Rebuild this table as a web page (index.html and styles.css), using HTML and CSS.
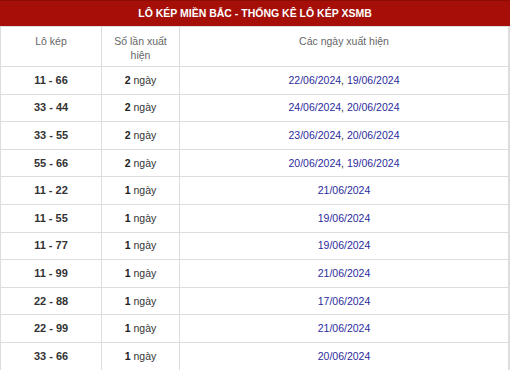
FILE: index.html
```html
<!DOCTYPE html>
<html lang="vi">
<head>
<meta charset="utf-8">
<title>Lô kép miền Bắc</title>
<link rel="stylesheet" href="styles.css">
</head>
<body>
<div class="box">
  <div class="title">LÔ KÉP MIỀN BẮC - THỐNG KÊ LÔ KÉP XSMB</div>
  <table class="tbl">
    <colgroup>
      <col class="c1"><col class="c2"><col class="c3">
    </colgroup>
    <thead>
      <tr><th>Lô kép</th><th>Số lần xuất<br>hiện</th><th>Các ngày xuất hiện</th></tr>
    </thead>
    <tbody>
      <tr><td class="pair">11 - 66</td><td><b>2</b> ngày</td><td><span class="d">22/06/2024</span>, <span class="d">19/06/2024</span></td></tr>
      <tr><td class="pair">33 - 44</td><td><b>2</b> ngày</td><td><span class="d">24/06/2024</span>, <span class="d">20/06/2024</span></td></tr>
      <tr><td class="pair">33 - 55</td><td><b>2</b> ngày</td><td><span class="d">23/06/2024</span>, <span class="d">20/06/2024</span></td></tr>
      <tr><td class="pair">55 - 66</td><td><b>2</b> ngày</td><td><span class="d">20/06/2024</span>, <span class="d">19/06/2024</span></td></tr>
      <tr><td class="pair">11 - 22</td><td><b>1</b> ngày</td><td><span class="d">21/06/2024</span></td></tr>
      <tr><td class="pair">11 - 55</td><td><b>1</b> ngày</td><td><span class="d">19/06/2024</span></td></tr>
      <tr><td class="pair">11 - 77</td><td><b>1</b> ngày</td><td><span class="d">19/06/2024</span></td></tr>
      <tr><td class="pair">11 - 99</td><td><b>1</b> ngày</td><td><span class="d">21/06/2024</span></td></tr>
      <tr><td class="pair">22 - 88</td><td><b>1</b> ngày</td><td><span class="d">17/06/2024</span></td></tr>
      <tr><td class="pair">22 - 99</td><td><b>1</b> ngày</td><td><span class="d">21/06/2024</span></td></tr>
      <tr><td class="pair">33 - 66</td><td><b>1</b> ngày</td><td><span class="d">20/06/2024</span></td></tr>
    </tbody>
  </table>
</div>
</body>
</html>
```
FILE: styles.css
```css
html, body {
  margin: 0;
  padding: 0;
  background: #fff;
}
body {
  font-family: "Liberation Sans", Arial, sans-serif;
  font-size: 10.5px;
  color: #333;
}
.box {
  width: 510px;
}
.title {
  height: 26px;
  line-height: 25px;
  background: #a50f08;
  border-top: 1px solid #8c0c06;
  box-sizing: border-box;
  color: #fff;
  font-weight: bold;
  font-size: 10.5px;
  text-align: center;
}
.tbl {
  width: 510px;
  border-collapse: collapse;
  border: 1px solid #ddd;
  border-right-width: 2px;
  table-layout: fixed;
}
.c1 { width: 101px; }
.c2 { width: 78px; }
.tbl th,
.tbl td {
  border: 1px solid #ddd;
  text-align: center;
  padding: 0;
}
.tbl th {
  font-weight: normal;
  color: #666;
  vertical-align: top;
  height: 40px;
  padding-top: 7px;
  line-height: 14px;
  box-sizing: border-box;
}
.tbl tbody tr {
  height: 27.6px;
}
.tbl td {
  vertical-align: middle;
  line-height: 13px;
}
.tbl td.pair {
  font-weight: bold;
  font-size: 11px;
  color: #333;
}
.tbl td b {
  color: #222;
}
.d {
  color: #2b2c9c;
}
```
